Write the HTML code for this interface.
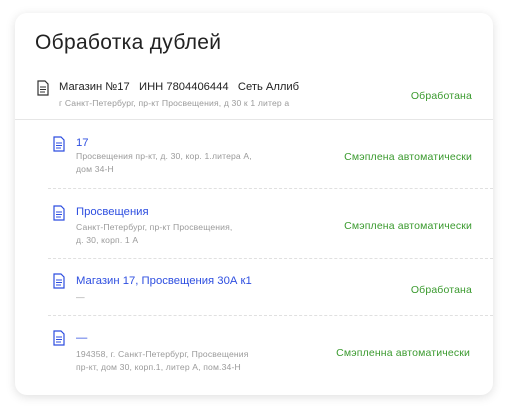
<!DOCTYPE html><html><head><meta charset="utf-8"><style>
body{margin:0;width:508px;height:413px;background:#fff;font-family:"Liberation Sans",sans-serif;position:relative;overflow:hidden}
.card{position:absolute;left:15px;top:13px;width:478px;height:382px;border-radius:12px;background:#fff;box-shadow:0 2px 10px rgba(0,0,0,.13)}
.a{position:absolute;white-space:nowrap}
.t{font-size:21px;color:#222;left:35px;top:31px;letter-spacing:.3px}
.h{font-size:11.2px;color:#222}
.g{font-size:8.6px;color:#9a9a9a;line-height:13px;letter-spacing:.15px}
.b{font-size:11.3px;color:#2d4ee0}
.s{font-size:10.5px;color:#3a9a2e;right:36px;letter-spacing:.15px}
.dash{position:absolute;left:48px;right:15px;border-top:1px dashed #e0e0e0}
svg{position:absolute}
</style></head><body>
<div class="card"></div>
<div class="a t">Обработка дублей</div>
<svg style="left:37px;top:80px" width="12" height="16" viewBox="0 0 12 16"><path d="M1 1h7l3 3v11H1z" fill="none" stroke="#333" stroke-width="1.2"/><path d="M3 7h6M3 9.5h6M3 12h5" stroke="#333"/></svg>
<div class="a h" style="left:59px;top:81px">Магазин №17&nbsp;&nbsp; ИНН 7804406444&nbsp;&nbsp; Сеть Аллиб</div>
<div class="a g" style="left:59px;top:97px">г Санкт-Петербург, пр-кт Просвещения, д 30 к 1 литер а</div>
<div class="a s" style="top:90px">Обработана</div>
<div style="position:absolute;left:15px;right:15px;top:119px;border-top:1px solid #e6e6e6"></div>

<svg style="left:53px;top:136px" width="12" height="16" viewBox="0 0 12 16"><path d="M1 1h7l3 3v11H1z" fill="none" stroke="#2d4ee0" stroke-width="1.2"/><path d="M3 7h6M3 9.5h6M3 12h5" stroke="#2d4ee0"/></svg>
<div class="a b" style="left:76px;top:137px">17</div>
<div class="a g" style="left:76px;top:150px">Просвещения пр-кт, д. 30, кор. 1.литера А,<br>дом 34-Н</div>
<div class="a s" style="top:151px">Смэплена автоматически</div>
<div class="dash" style="top:188px"></div>

<svg style="left:53px;top:205px" width="12" height="16" viewBox="0 0 12 16"><path d="M1 1h7l3 3v11H1z" fill="none" stroke="#2d4ee0" stroke-width="1.2"/><path d="M3 7h6M3 9.5h6M3 12h5" stroke="#2d4ee0"/></svg>
<div class="a b" style="left:76px;top:206px">Просвещения</div>
<div class="a g" style="left:76px;top:221px">Санкт-Петербург, пр-кт Просвещения,<br>д. 30, корп. 1 А</div>
<div class="a s" style="top:220px">Смэплена автоматически</div>
<div class="dash" style="top:258px"></div>

<svg style="left:53px;top:273px" width="12" height="16" viewBox="0 0 12 16"><path d="M1 1h7l3 3v11H1z" fill="none" stroke="#2d4ee0" stroke-width="1.2"/><path d="M3 7h6M3 9.5h6M3 12h5" stroke="#2d4ee0"/></svg>
<div class="a b" style="left:76px;top:275px">Магазин 17, Просвещения 30А к1</div>
<div class="a g" style="left:76px;top:291px">—</div>
<div class="a s" style="top:284px">Обработана</div>
<div class="dash" style="top:315px"></div>

<svg style="left:53px;top:330px" width="12" height="16" viewBox="0 0 12 16"><path d="M1 1h7l3 3v11H1z" fill="none" stroke="#2d4ee0" stroke-width="1.2"/><path d="M3 7h6M3 9.5h6M3 12h5" stroke="#2d4ee0"/></svg>
<div class="a b" style="left:76px;top:332px">—</div>
<div class="a g" style="left:76px;top:348px">194358, г. Санкт-Петербург, Просвещения<br>пр-кт, дом 30, корп.1, литер А, пом.34-Н</div>
<div class="a s" style="top:347px;right:38px">Смэпленна автоматически</div>
</body></html>
